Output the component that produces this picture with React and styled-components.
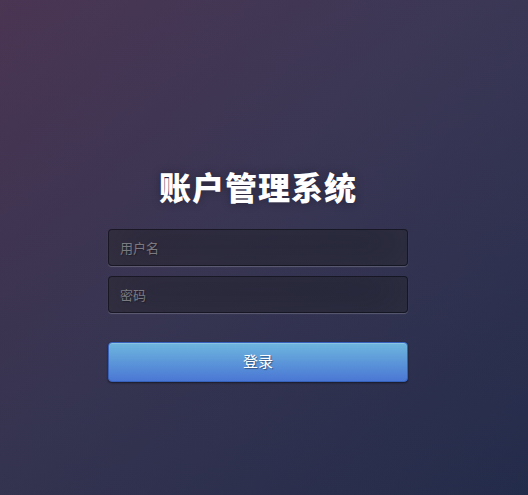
import styled, { createGlobalStyle } from 'styled-components'

const GlobalStyle = createGlobalStyle`
    html, body {
        margin: 0;
        padding: 0;
        height: 100%;
    }
    body {
        font-family: "Noto Sans CJK SC", "Liberation Sans", sans-serif;
    }
`

const Page = styled.div`
    box-sizing: border-box;
    height: 495px;
    padding: 165px 12px 0 0;
    background:
        linear-gradient(to bottom, rgba(70, 60, 100, 0.15) 0%, rgba(20, 30, 60, 0.15) 100%),
        linear-gradient(135deg, #4b3450 0%, #3a3753 45%, #262e4d 100%);
    overflow: hidden;
`

const LoginBox = styled.form`
    width: 300px;
    margin: 0 auto;
    display: flex;
    flex-direction: column;
`

const Title = styled.h1`
    margin: 0 0 22px;
    color: #fff;
    font-size: 32px;
    line-height: 42px;
    font-weight: 900;
    letter-spacing: 1px;
    text-align: center;
    text-shadow: 0 0 10px rgba(0, 0, 0, 0.3);
`

const Field = styled.input`
    box-sizing: border-box;
    width: 100%;
    height: 37px;
    margin-bottom: 10px;
    padding: 0 11px;
    font-family: inherit;
    font-size: 13px;
    color: #fff;
    background: rgba(0, 0, 0, 0.3);
    border: 1px solid rgba(0, 0, 0, 0.35);
    border-radius: 4px;
    outline: none;
    text-shadow: 1px 1px 1px rgba(0, 0, 0, 0.3);
    box-shadow: inset 0 -5px 45px rgba(100, 100, 100, 0.2), 0 1px 1px rgba(255, 255, 255, 0.2);

    &::placeholder {
        color: #7a7a80;
    }
`

const SubmitButton = styled.button`
    box-sizing: border-box;
    width: 100%;
    height: 40px;
    margin-top: 19px;
    padding: 0 0 3px;
    font-family: inherit;
    font-size: 15px;
    color: #fff;
    background-color: #4a77d4;
    background-image: linear-gradient(to bottom, #6eb6de, #4a77d4);
    border: 1px solid #3762bc;
    border-radius: 4px;
    text-shadow: 1px 1px 1px rgba(0, 0, 0, 0.4);
    box-shadow: inset 0 1px 0 rgba(255, 255, 255, 0.2), 0 1px 2px rgba(0, 0, 0, 0.5);
    cursor: pointer;
`

export default function App() {
    return (
        <>
            <GlobalStyle />
            <Page>
                <LoginBox onSubmit={e => e.preventDefault()}>
                    <Title>账户管理系统</Title>
                    <Field type="text" placeholder="用户名" />
                    <Field type="password" placeholder="密码" />
                    <SubmitButton type="submit">登录</SubmitButton>
                </LoginBox>
            </Page>
        </>
    )
}
